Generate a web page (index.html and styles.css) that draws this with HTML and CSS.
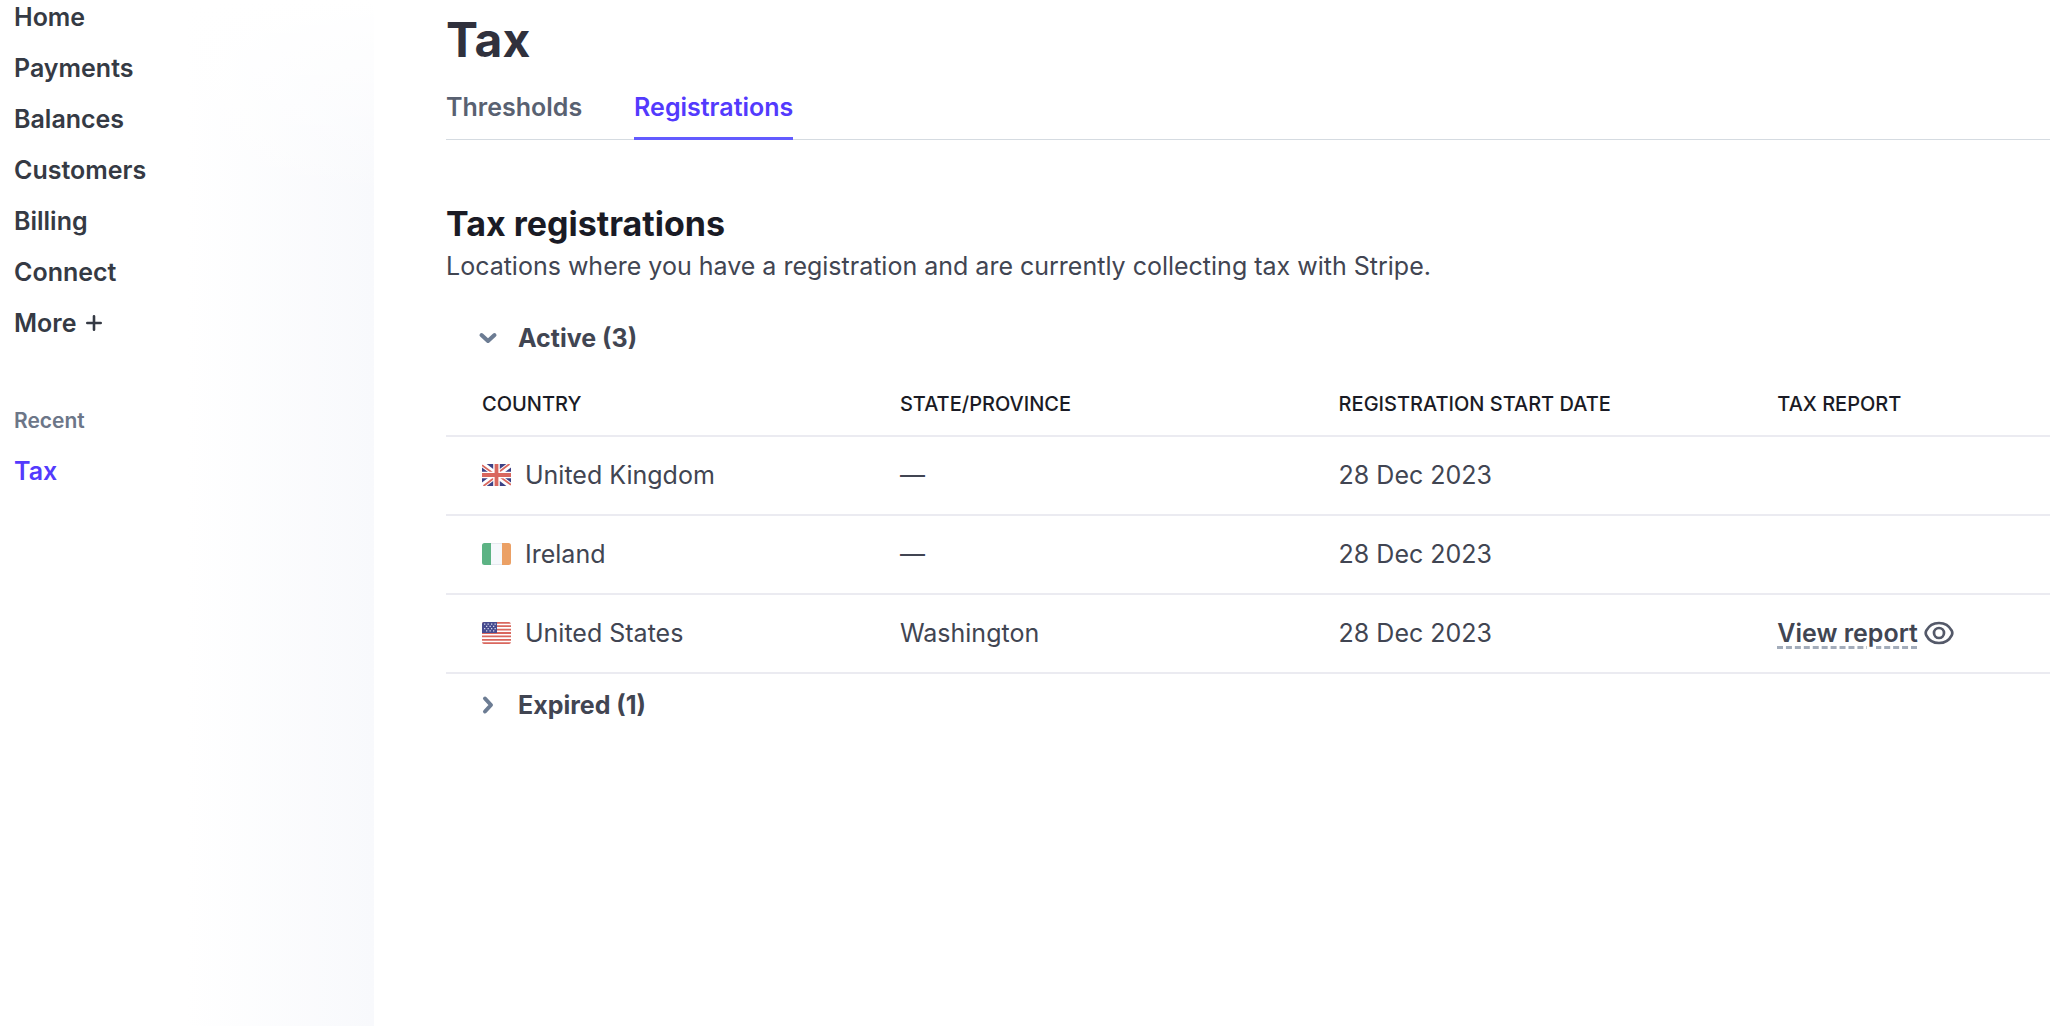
FILE: index.html
```html
<!DOCTYPE html>
<html lang="en">
<head>
  <meta charset="UTF-8" />
  <meta name="viewport" content="width=device-width, initial-scale=1.0"/>
  <title>Tax registrations</title>
  <link rel="stylesheet" href="styles.css">
</head>
<body>
  <div class="layout">
    <aside class="sidebar">
      <nav class="side-nav">
        <a href="#home">Home</a>
        <a href="#payments">Payments</a>
        <a href="#balances">Balances</a>
        <a href="#customers">Customers</a>
        <a href="#billing">Billing</a>
        <a href="#connect">Connect</a>
        <button type="button" class="more-btn">
          More
          <svg class="plus-icon" viewBox="0 0 16 16" aria-hidden="true">
            <path d="M8 1.300v13.400M1.300 8h13.400" fill="none" stroke="currentColor" stroke-width="2.600" stroke-linecap="round"/>
          </svg>
        </button>
      </nav>
      <h2 class="recent-title">Recent</h2>
      <nav class="side-nav">
        <a href="#tax" class="active">Tax</a>
      </nav>
    </aside>

    <main class="content">
      <h1>Tax</h1>

      <nav class="tabs">
        <a href="#thresholds">Thresholds</a>
        <a href="#registrations" class="active">Registrations</a>
      </nav>

      <section class="registrations">
        <h2>Tax registrations</h2>
        <p>Locations where you have a registration and are currently collecting tax with Stripe.</p>

        <!-- Active registrations -->
        <button type="button" class="group-toggle" aria-expanded="true">
          <svg class="chevron" viewBox="0 0 20 20" aria-hidden="true">
            <path d="M3.500 7l6.500 6 6.500-6" fill="none" stroke="currentColor" stroke-width="4" stroke-linecap="round" stroke-linejoin="round"/>
          </svg>
          Active (3)
        </button>

        <table>
          <thead>
            <tr>
              <th class="col-country">Country</th>
              <th class="col-state">State/Province</th>
              <th class="col-date">Registration start date</th>
              <th>Tax report</th>
            </tr>
          </thead>
          <tbody>
            <tr>
              <td>
                <div class="country">
                  <svg class="flag" viewBox="0 0 29 22" aria-hidden="true">
                    <rect width="29" height="22" rx="1" fill="#3d4185"/>
                    <path d="M0 0l29 22M29 0L0 22" stroke="#fff" stroke-width="5.600"/>
                    <path d="M0 1.200l11 8M29 20.800l-11-8M27.500 0L17 8M1.500 22L12 14" stroke="#d9675e" stroke-width="1.800"/>
                    <path d="M14.500 0v22M0 11h29" stroke="#fff" stroke-width="6.600"/>
                    <path d="M14.500 0v22M0 11h29" stroke="#d9675e" stroke-width="3.800"/>
                  </svg>
                  United Kingdom
                </div>
              </td>
              <td>—</td>
              <td>28 Dec 2023</td>
              <td></td>
            </tr>
            <tr>
              <td>
                <div class="country">
                  <svg class="flag" viewBox="0 0 29 22" aria-hidden="true">
                    <rect x="5" width="19" height="22" fill="#e6e9ef"/>
                    <rect x="5" y="1" width="19" height="20" fill="#f6f8fc"/>
                    <path d="M9 0H2.500A2.500 2.500 0 0 0 0 2.500v17A2.500 2.500 0 0 0 2.500 22H9z" fill="#5cb384"/>
                    <path d="M20 0h6.500A2.500 2.500 0 0 1 29 2.500v17a2.500 2.500 0 0 1-2.500 2.500H20z" fill="#eba065"/>
                  </svg>
                  Ireland
                </div>
              </td>
              <td>—</td>
              <td>28 Dec 2023</td>
              <td></td>
            </tr>
            <tr>
              <td>
                <div class="country">
                  <svg class="flag" viewBox="0 0 29 22" aria-hidden="true">
                    <rect width="29" height="22" rx="2" fill="#fff"/>
                    <path d="M2 0h25a2 2 0 0 1 1.800 1.700H0A2 2 0 0 1 2 0z" fill="#d9675e"/>
                    <path d="M0 4.200h29M0 7.600h29M0 11h29M0 14.400h29M0 17.800h29" stroke="#d9675e" stroke-width="1.800"/>
                    <path d="M0 20.300h29a2 2 0 0 1-2 1.700H2a2 2 0 0 1-2-1.700z" fill="#d9675e"/>
                    <path d="M2 0h13v11H0V2a2 2 0 0 1 2-2z" fill="#474b8f"/>
                    <path d="M2 2.200h12M4 4.400h10M2 6.600h12M4 8.800h10" stroke="#d5d8ea" stroke-width="1.300" stroke-dasharray="1.300 2.200"/>
                  </svg>
                  United States
                </div>
              </td>
              <td>Washington</td>
              <td>28 Dec 2023</td>
              <td>
                <a href="#report" class="report-link">
                  <span>View report</span>
                  <svg class="eye-icon" viewBox="0 0 30 24" aria-hidden="true">
                    <path d="M15 2C8.500 2 4.200 6 2.300 9.700a5 5 0 0 0 0 4.600C4.200 18 8.500 22 15 22s10.800-4 12.700-7.700a5 5 0 0 0 0-4.600C25.800 6 21.500 2 15 2z" fill="none" stroke="currentColor" stroke-width="2.700"/>
                    <circle cx="15" cy="12" r="5" fill="none" stroke="currentColor" stroke-width="2.700"/>
                  </svg>
                </a>
              </td>
            </tr>
          </tbody>
        </table>

        <!-- Expired registrations, collapsed -->
        <button type="button" class="group-toggle" aria-expanded="false">
          <svg class="chevron" viewBox="0 0 20 20" aria-hidden="true">
            <path d="M7 3.500l6 6.500-6 6.500" fill="none" stroke="currentColor" stroke-width="4" stroke-linecap="round" stroke-linejoin="round"/>
          </svg>
          Expired (1)
        </button>
      </section>
    </main>
  </div>
</body>
</html>
```

FILE: styles.css
```css
/* General Styles */
* {
  box-sizing: border-box;
}

body {
  font-family: 'Inter', 'Liberation Sans', sans-serif;
  font-size: 25px;
  line-height: 30px;
  background-color: #fff;
  margin: 0;
  color: #414552;
}

h1,
h2,
p {
  margin: 0;
}

a {
  color: inherit;
  text-decoration: none;
}

button {
  font: inherit;
  color: inherit;
  background: none;
  border: none;
  padding: 0;
  cursor: pointer;
}

.layout {
  display: flex;
  min-height: 100vh;
}

/* Sidebar */
.sidebar {
  flex: 0 0 374px;
  padding: 2px 14px;
  background: linear-gradient(to bottom, #fff, rgba(255, 255, 255, 0) 200px),
    linear-gradient(to right, #fff 50%, #f8f9fc);
}

.side-nav {
  display: flex;
  flex-direction: column;
  align-items: flex-start;
  gap: 21px;
  font-weight: 600;
  color: #353a44;
}

.side-nav a.active {
  color: #533afd;
}

.more-btn {
  display: flex;
  align-items: center;
  gap: 10px;
}

.plus-icon {
  width: 16px;
  height: 16px;
}

.recent-title {
  margin: 68px 0 20px;
  font-size: 21px;
  font-weight: 600;
  color: #6c7688;
}

/* Main content */
.content {
  flex: 1;
  min-width: 0;
  padding: 10px 0 0 72px;
}

h1 {
  font-size: 48px;
  line-height: 60px;
  font-weight: 700;
  color: #30313d;
}

.tabs {
  display: flex;
  gap: 52px;
  margin-top: 22px;
  border-bottom: 1px solid #d5dbe1;
  font-weight: 600;
  color: #596171;
}

.tabs a {
  padding-bottom: 15px;
  margin-bottom: -1px;
  border-bottom: 3px solid transparent;
}

.tabs a.active {
  color: #533afd;
  border-color: #635bff;
}

.registrations {
  padding-top: 62px;
}

.registrations h2 {
  font-size: 34px;
  line-height: 44px;
  font-weight: 700;
  color: #1a1b25;
}

.registrations p {
  margin-top: 5px;
}

.group-toggle {
  display: flex;
  align-items: center;
  gap: 20px;
  height: 62px;
  padding-left: 32px;
  font-weight: 700;
}

.registrations p + .group-toggle {
  margin-top: 26px;
}

.chevron {
  width: 20px;
  height: 20px;
  color: #6c7c93;
}

/* Registrations table */
table {
  width: 100%;
  table-layout: fixed;
  border-collapse: collapse;
}

th,
td {
  padding: 0;
  text-align: left;
  border-bottom: 2px solid #ebebf1;
}

th {
  height: 67px;
  padding-top: 4px;
  font-size: 20px;
  font-weight: 500;
  text-transform: uppercase;
  color: #1a1b25;
}

td {
  height: 79px;
  padding-bottom: 2px;
}

th:first-child,
td:first-child {
  padding-left: 36px;
}

.col-country {
  width: 28.3%;
}

.col-state,
.col-date {
  width: 27.35%;
}

.country {
  display: flex;
  align-items: center;
  gap: 14px;
}

.flag {
  width: 29px;
  height: 22px;
}

.report-link {
  display: flex;
  align-items: center;
  gap: 6px;
  font-weight: 600;
}

.report-link span {
  text-decoration: underline dashed #a3acba 3px;
  text-underline-offset: 4px;
}

.eye-icon {
  width: 30px;
  height: 24px;
  color: #545969;
}
```
